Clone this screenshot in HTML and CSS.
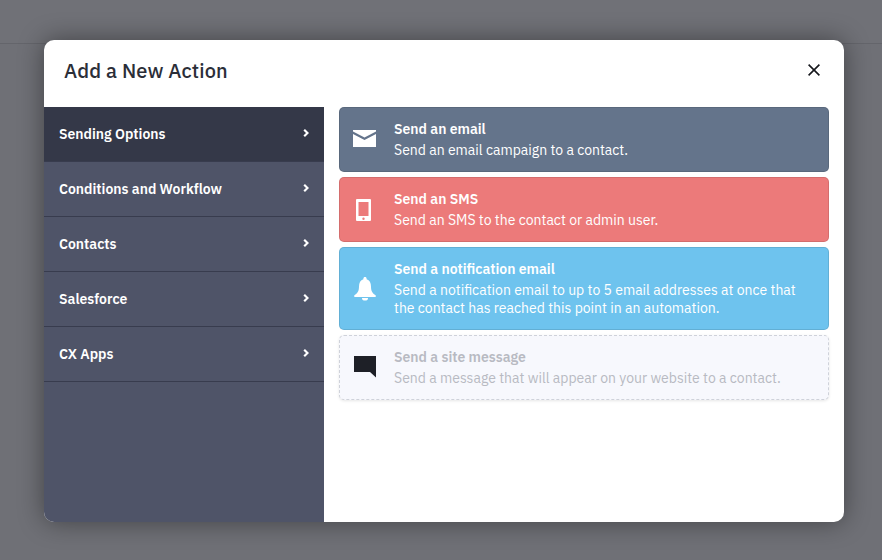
FILE: index.html
```html
<!DOCTYPE html>
<html lang="en">
<head>
<meta charset="utf-8">
<title>Add a New Action</title>
<link rel="stylesheet" href="styles.css">
</head>
<body>
<div class="topbar"></div>
<div class="modal">
  <header class="modal-head">
    <h1>Add a New Action</h1>
    <svg class="close" viewBox="0 0 12 12" width="12" height="12"><path d="M.6.6l10.800 10.800M11.400.6L.6 11.400"/></svg>
  </header>
  <div class="modal-body">
    <nav class="side">
      <a class="side-item active"><span>Sending Options</span><svg class="chev" viewBox="0 0 6 8" width="6" height="8"><path d="M1.200.8L4.500 4 1.200 7.200"/></svg></a>
      <a class="side-item"><span>Conditions and Workflow</span><svg class="chev" viewBox="0 0 6 8" width="6" height="8"><path d="M1.200.8L4.500 4 1.200 7.200"/></svg></a>
      <a class="side-item"><span>Contacts</span><svg class="chev" viewBox="0 0 6 8" width="6" height="8"><path d="M1.200.8L4.500 4 1.200 7.200"/></svg></a>
      <a class="side-item"><span>Salesforce</span><svg class="chev" viewBox="0 0 6 8" width="6" height="8"><path d="M1.200.8L4.500 4 1.200 7.200"/></svg></a>
      <a class="side-item"><span>CX Apps</span><svg class="chev" viewBox="0 0 6 8" width="6" height="8"><path d="M1.200.8L4.500 4 1.200 7.200"/></svg></a>
    </nav>
    <main class="list">
      <div class="card slate">
        <svg class="icon" viewBox="0 0 24 20" width="24" height="20"><path d="M0 0h23v1.500L11.500 7.500 0 1.500z"/><path d="M0 4l11.500 6L23 4v13H0z"/></svg>
        <div class="text"><b>Send an email</b><p>Send an email campaign to a contact.</p></div>
      </div>
      <div class="card red">
        <svg class="icon" viewBox="0 0 24 24" width="24" height="24"><path fill-rule="evenodd" d="M4 1h13a1 1 0 0 1 1 1v20a1 1 0 0 1-1 1H4a1 1 0 0 1-1-1V2a1 1 0 0 1 1-1zm1.500 3v14h10V4zm5 15.500a1.200 1.200 0 1 0 0 2.400 1.200 1.200 0 0 0 0-2.400z"/></svg>
        <div class="text"><b>Send an SMS</b><p>Send an SMS to the contact or admin user.</p></div>
      </div>
      <div class="card blue">
        <svg class="icon" viewBox="0 0 24 24" width="24" height="24"><path d="M12 0c1 0 1.600.7 1.600 1.600v.6c3 .8 4.400 3.600 4.400 7.300 0 4.500 1.300 6.800 4.700 8.800V20H1.300v-1.700C4.700 16.300 6 14 6 9.500c0-3.700 1.400-6.500 4.400-7.300v-.6C10.400.7 11 0 12 0z"/><path d="M9 21h6a3 2.600 0 0 1-6 0z"/></svg>
        <div class="text"><b>Send a notification email</b><p>Send a notification email to up to 5 email addresses at once that the contact has reached this point in an automation.</p></div>
      </div>
      <div class="card ghost">
        <svg class="icon" viewBox="0 0 24 24" width="24" height="24"><path d="M1 0h22v21.500L17 16H1z"/></svg>
        <div class="text"><b>Send a site message</b><p>Send a message that will appear on your website to a contact.</p></div>
      </div>
    </main>
  </div>
</div>
</body>
</html>
```
FILE: styles.css
```css
* { box-sizing: border-box; }
html, body { margin: 0; height: 100%; }
body {
  background: #6f7076;
  font-family: "IBM Plex Sans", "Inter", "Noto Sans", sans-serif;
  overflow: hidden;
  width: 882px;
  height: 560px;
  display: flex;
  flex-direction: column;
}
.topbar {
  height: 44px;
  flex: none;
  background: #707177;
  border-bottom: 1px solid #64656b;
  margin-bottom: -4px;
}
.modal {
  width: 800px;
  height: 482px;
  margin-left: 44px;
  flex: none;
  background: #fff;
  border-radius: 10px;
  overflow: hidden;
  display: flex;
  flex-direction: column;
  box-shadow: 0 0 26px rgba(0,0,0,.42);
}
.modal-head {
  height: 67px;
  flex: none;
  display: flex;
  align-items: center;
  justify-content: space-between;
  padding: 0 24px 7px 20px;
}
h1 { margin: 0; font-size: 20px; font-weight: 500; color: #2b2e38; letter-spacing: .1px; }
.close { fill: none; stroke: #16181d; stroke-width: 1.600; }
.modal-body { flex: 1; display: flex; min-height: 0; }
.side { width: 280px; flex: none; background: #4f5468; }
.side-item {
  height: 55px;
  display: flex;
  align-items: center;
  justify-content: space-between;
  padding: 0 15px;
  color: #fff;
  font-size: 14px;
  font-weight: 600;
  border-bottom: 1px solid #383c4e;
}
.side-item.active { background: #343848; }
.chev { fill: none; stroke: #fff; stroke-width: 2.200; margin-bottom: 3px; }
.list { flex: 1; padding: 0 15px; display: flex; flex-direction: column; gap: 5px; }
.card {
  display: flex;
  align-items: center;
  gap: 17px;
  padding: 12px 13px;
  border-radius: 5px;
  color: #fff;
  font-size: 14px;
  line-height: 18px;
  border: 1px solid rgba(0,0,0,.1);
}
.card b { font-weight: 600; display: block; }
.card p { margin: 3px 0 0; }
.text { flex: 1; }
.icon { fill: #fff; flex: none; }
.slate { background: #64748b; }
.red { background: #ec7a7a; }
.blue { background: #6ec3ee; }
.ghost { background: #f7f8fd; color: #b8bac2; border: 1px dashed #cfd2da; box-shadow: 0 1px 3px rgba(0,0,0,.1); }
.ghost .icon { fill: #1e2027; }
```
